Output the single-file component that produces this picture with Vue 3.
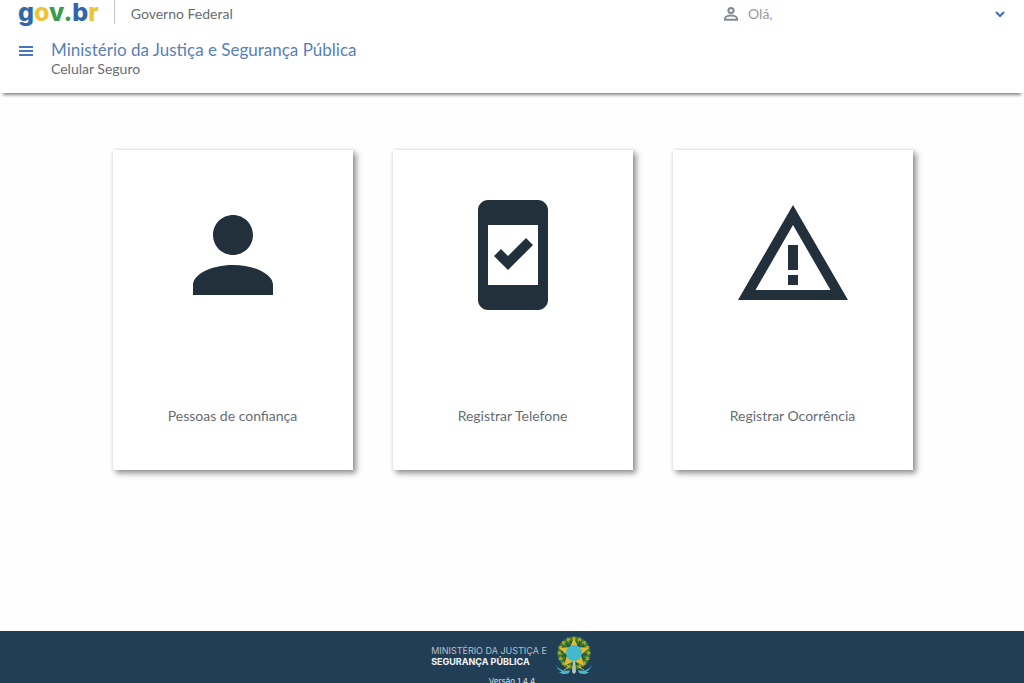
<script setup>
const cards = [
  {
    label: 'Pessoas de confiança',
    href: '#pessoas',
    path: 'M12 12c2.21 0 4-1.79 4-4s-1.79-4-4-4-4 1.79-4 4 1.79 4 4 4zm0 2c-4.4 0-8 1.9-8 4v2h16v-2c0-2.1-3.6-4-8-4z',
  },
  {
    label: 'Registrar Telefone',
    href: '#telefone',
    path: 'M17 1H7c-1.1 0-2 .9-2 2v18c0 1.1.9 2 2 2h10c1.1 0 2-.9 2-2V3c0-1.1-.9-2-2-2zm0 17H7V6h10v12zm-1-8-1.4-1.4-3.6 3.6-1.4-1.4L8.2 12.2 11 15z',
  },
  {
    label: 'Registrar Ocorrência',
    href: '#ocorrencia',
    path: 'M12 6l7.5 13h-15L12 6M12 2L1 21h22L12 2zm1 14h-2v2h2v-2zm0-6h-2v5h2v-5z',
  },
]
const leaves = Array.from({ length: 16 }, (_, i) => i * 22.5)
</script>

<template>
  <div class="page">
    <header class="header">
      <div class="top">
        <a class="logo" href="#inicio" aria-label="gov.br"><span class="blue">g</span><span class="yellow">o</span><span class="green">v.</span><span class="blue">b</span><span class="yellow">r</span></a>
        <span class="divider"></span>
        <span class="federal">Governo Federal</span>
        <button class="user" type="button">
          <svg class="user-icon" viewBox="0 0 16 16" aria-hidden="true">
            <circle cx="8" cy="4.5" r="2.6" />
            <path d="M2 13.8v-1.2c0-1.9 3.2-3 6-3s6 1.1 6 3v1.2z" />
          </svg>
          <span>Olá,</span>
          <svg class="chevron" viewBox="0 0 12 12" aria-hidden="true"><path d="M2 4l4 4 4-4" /></svg>
        </button>
      </div>
      <div class="title-row">
        <button class="menu" type="button" aria-label="Menu">
          <svg viewBox="0 0 16 12" aria-hidden="true"><path d="M1 2h14M1 6h14M1 10h14" /></svg>
        </button>
        <div>
          <h1 class="title">Ministério da Justiça e Segurança Pública</h1>
          <p class="subtitle">Celular Seguro</p>
        </div>
      </div>
    </header>

    <main class="main">
      <a v-for="card in cards" :key="card.href" class="card" :href="card.href">
        <svg class="card-icon" viewBox="0 0 24 24" aria-hidden="true"><path fill-rule="evenodd" :d="card.path" /></svg>
        <span class="card-label">{{ card.label }}</span>
      </a>
    </main>

    <footer class="footer">
      <div class="brand">
        <p class="ministry">MINISTÉRIO DA JUSTIÇA E<br /><strong>SEGURANÇA PÚBLICA</strong></p>
        <svg class="arms" viewBox="0 0 38 40" aria-hidden="true">
          <path d="M1 29c3 5 9 7 14 5l-1 3c-4 2-8 1-10-1l3 0c-3-2-5-4-6-7zM37 29c-3 5-9 7-14 5l1 3c4 2 8 1 10-1l-3 0c3-2 5-4 6-7z" fill="#4fb5c5" />
          <circle cx="19" cy="17" r="13" fill="none" stroke="#3c7d34" stroke-width="7" />
          <g v-for="angle in leaves" :key="angle" :transform="`rotate(${angle} 19 17)`">
            <path d="M17 3l2-3 2 3-2 2z" fill="#b5a533" />
            <path d="M19 3l3 3-2 3z" fill="#245f2b" />
          </g>
          <path d="M19 2l4 9 11 1-8 7 3 11-10-5-10 5 3-11L4 12l11-1z" fill="#e1bb32" />
          <circle cx="19" cy="17" r="8" fill="#43b9cb" />
          <path d="M18 25h2l1 11-2 2-2-2z" fill="#b9c4bb" />
          <path d="M9 34l7-4M29 34l-7-4" stroke="#c8b345" stroke-width="1" />
        </svg>
      </div>
      <p class="version">Versão 1.4.4</p>
    </footer>
  </div>
</template>

<style>
body {
  background: #fefefe;
}
</style>

<style scoped>
.page {
  display: flex;
  flex-direction: column;
  height: 100vh;
  overflow: hidden;
  font-family: Lato, "Open Sans", sans-serif;
  font-size: 14px;
  color: #676c73;
}
p,
h1 {
  margin: 0;
  font-weight: 400;
}
button {
  padding: 0;
  border: 0;
  background: none;
  font: inherit;
  color: inherit;
  cursor: pointer;
}
a {
  color: inherit;
  text-decoration: none;
}
svg {
  display: block;
  flex: none;
}
.header {
  flex: none;
  padding: 0 18px 15px;
  background: #fff;
  box-shadow: 0 5px 3px -3px #888;
}
.top {
  display: flex;
  align-items: center;
  height: 27px;
}
.logo {
  font-family: Inter, "Open Sans", sans-serif;
  font-size: 25px;
  line-height: 24px;
  font-weight: 800;
  margin-bottom: 4px;
}
.blue {
  color: #2f66ac;
}
.yellow {
  color: #edc437;
}
.green {
  color: #3c9b4a;
}
.divider {
  width: 1px;
  height: 24px;
  margin: 0 16px 4px 15px;
  background: #c4c4c4;
}
.user {
  display: flex;
  align-items: center;
  width: 283px;
  margin-left: auto;
  color: #999;
}
.user-icon {
  width: 16px;
  height: 16px;
  margin-right: 9px;
  fill: none;
  stroke: #858a90;
  stroke-width: 2;
}
.chevron {
  width: 12px;
  height: 12px;
  margin-left: auto;
  fill: none;
  stroke: #3f70b5;
  stroke-width: 2;
}
.title-row {
  display: flex;
  margin-top: 13px;
}
.menu {
  width: 16px;
  height: 22px;
  margin-right: 17px;
}
.menu svg {
  width: 16px;
  height: 12px;
  fill: none;
  stroke: #4677b9;
  stroke-width: 2;
}
.title {
  font-size: 17px;
  line-height: 20px;
  color: #587fb9;
}
.subtitle {
  line-height: 18px;
}
.main {
  flex: 1;
  display: flex;
  justify-content: center;
  align-items: flex-start;
  gap: 40px;
  padding: 57px 19px 0 20px;
}
.card {
  display: flex;
  flex-direction: column;
  align-items: center;
  justify-content: space-between;
  width: 240px;
  height: 320px;
  padding: 45px 0;
  box-sizing: border-box;
  background: #fff;
  box-shadow: 3px 3px 6px #85898d, 0 0 3px #e4e4e4;
}
.card-icon {
  width: 120px;
  height: 120px;
  fill: #22303c;
}
.card-label {
  line-height: 18px;
}
.footer {
  flex: none;
  height: 52px;
  overflow: hidden;
  background: #213e57;
  color: #dce3e8;
  font-family: Inter, "Open Sans", sans-serif;
}
.brand {
  display: flex;
  justify-content: center;
  align-items: center;
  gap: 8px;
  height: 45px;
  padding-top: 4px;
  box-sizing: border-box;
}
.ministry {
  font-size: 9px;
  line-height: 11px;
  color: #b5c0ca;
}
.ministry strong {
  color: #f4f6f8;
}
.arms {
  width: 38px;
  height: 40px;
}
.version {
  font-size: 8px;
  line-height: 10px;
  text-align: center;
}
</style>
